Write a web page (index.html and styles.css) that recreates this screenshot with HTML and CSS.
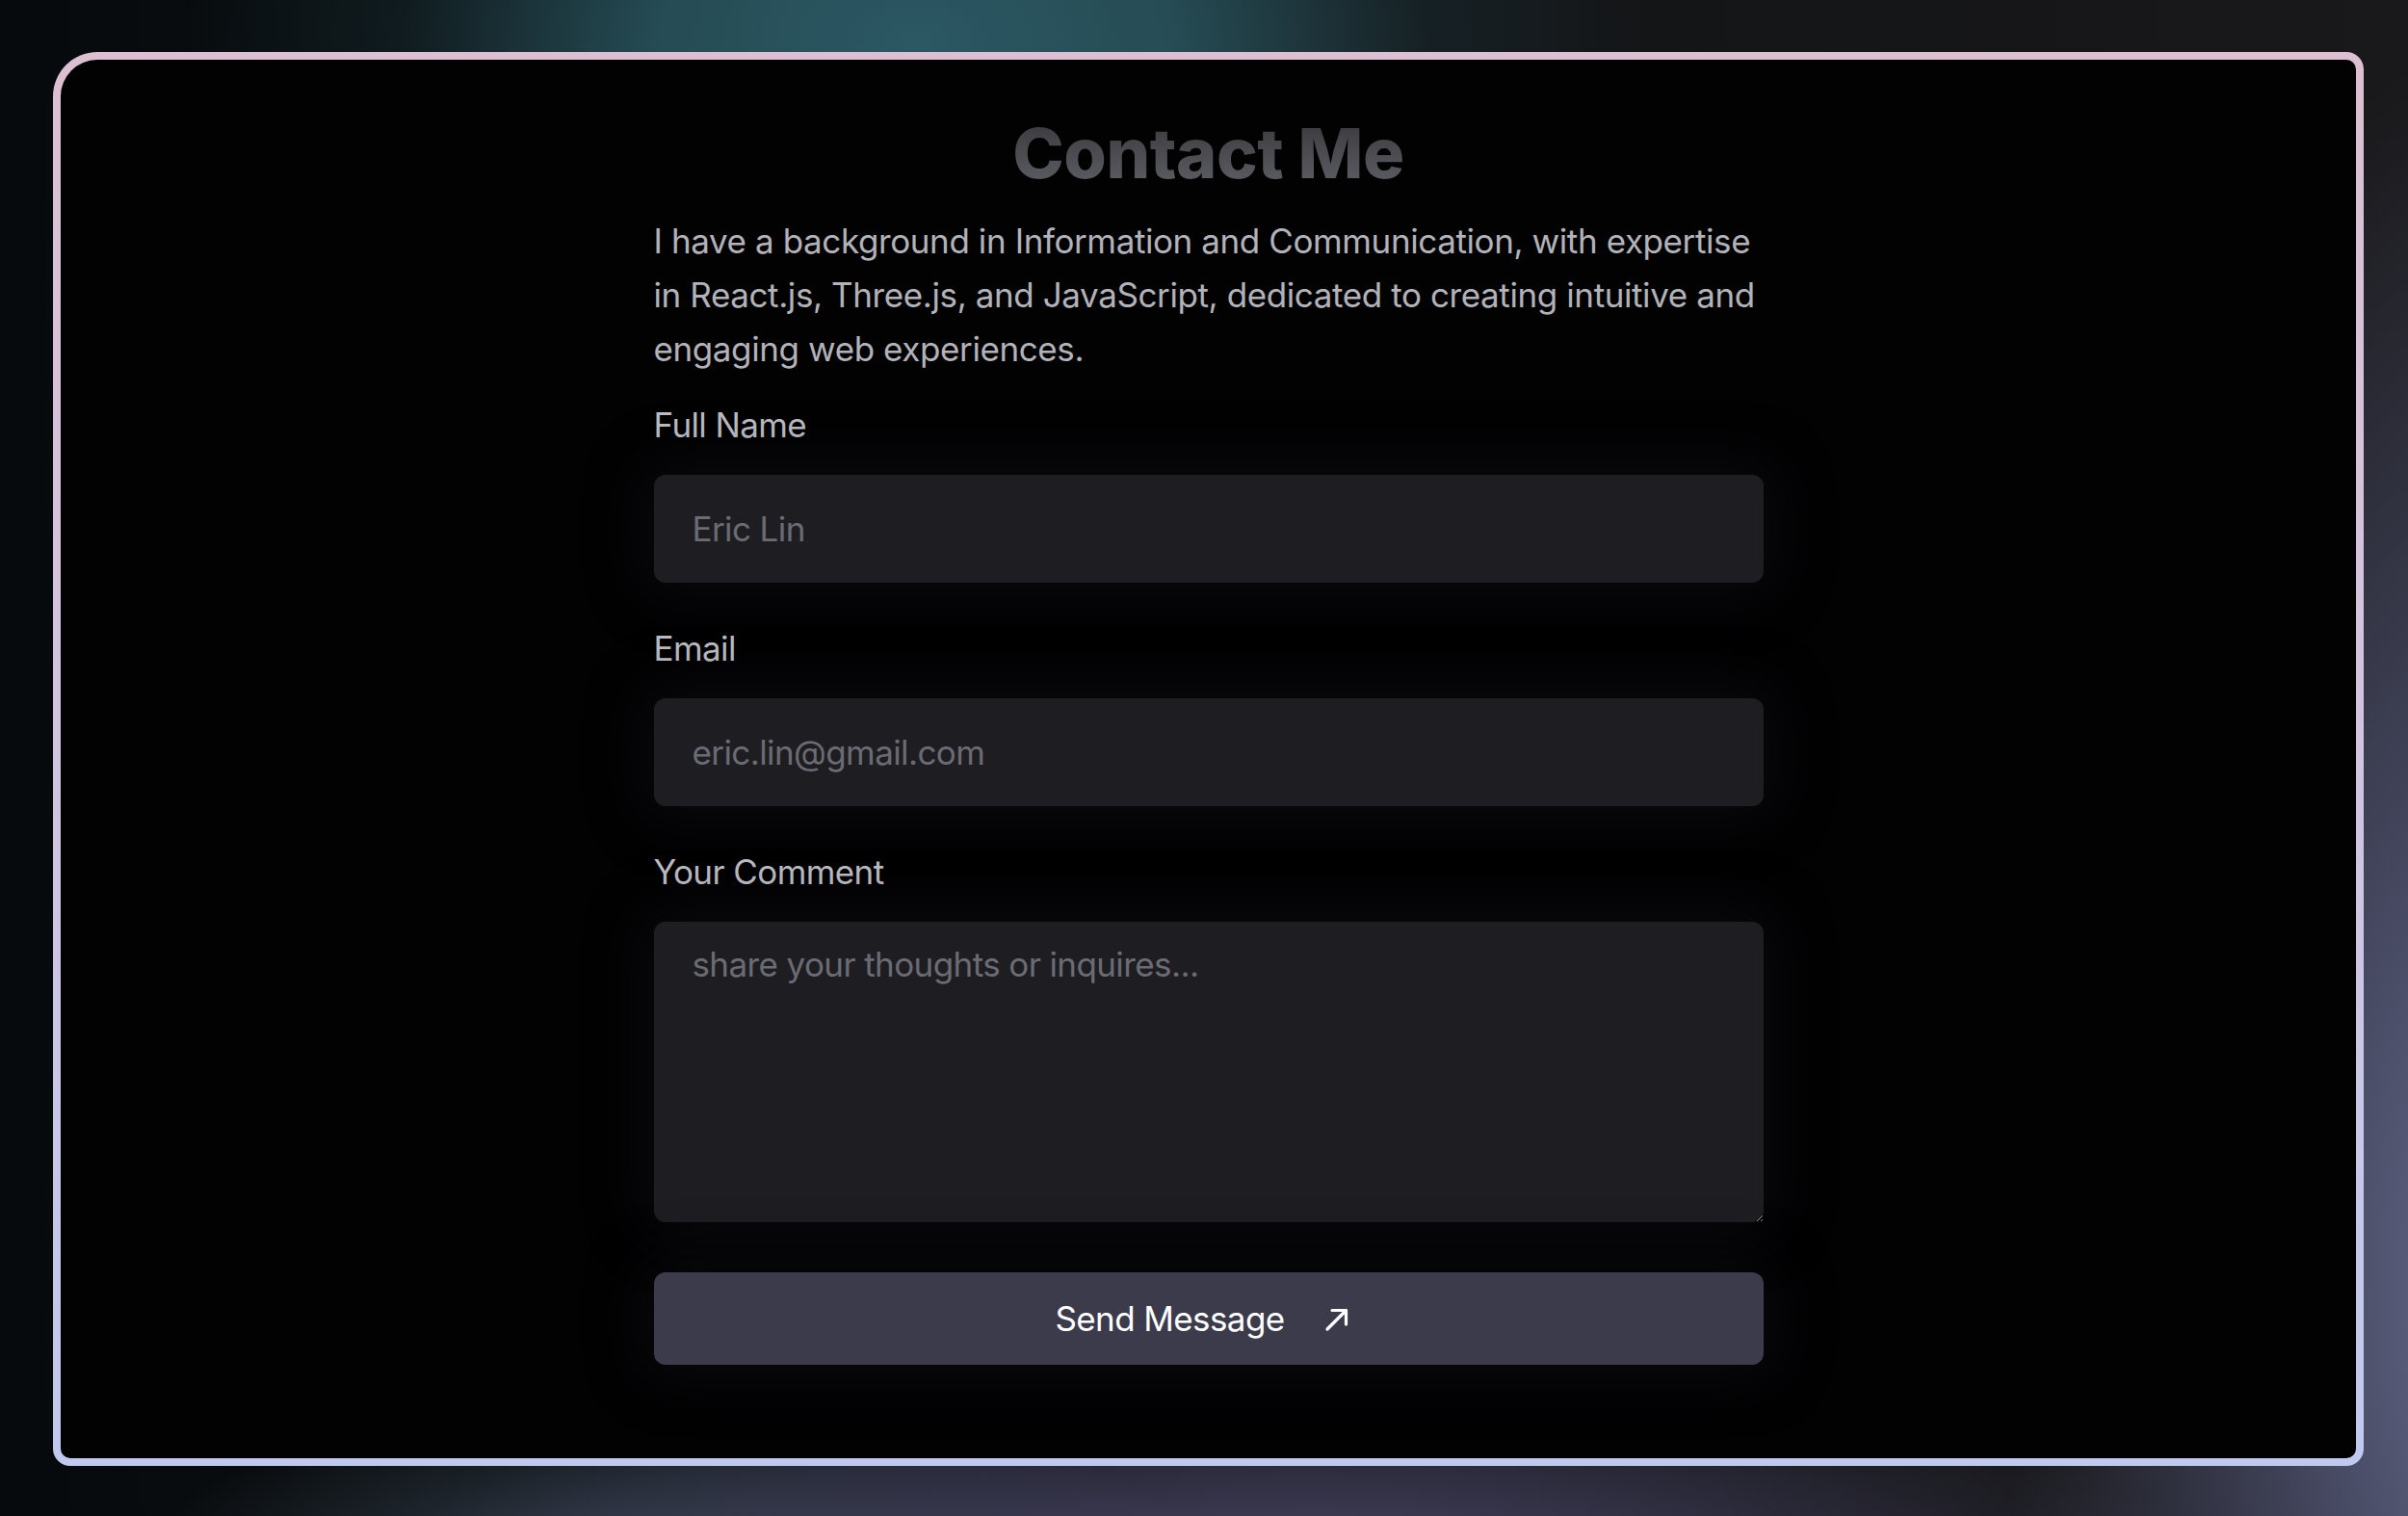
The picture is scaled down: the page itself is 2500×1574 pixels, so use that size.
FILE: index.html
```html
<!DOCTYPE html>
<html lang="en">
<head>
<meta charset="utf-8">
<title>Contact Me</title>
<link rel="stylesheet" href="styles.css">
</head>
<body>
<div class="page">
  <div class="frame">
    <main class="card">
      <form class="contact" onsubmit="return false">
        <h1 class="title">Contact Me</h1>
        <p class="intro">I have a background in Information and Communication, with expertise in React.js, Three.js, and JavaScript, dedicated to creating intuitive and engaging web experiences.</p>
        <div class="field">
          <label class="label" for="name">Full Name</label>
          <input class="input" id="name" type="text" placeholder="Eric Lin">
        </div>
        <div class="field">
          <label class="label" for="email">Email</label>
          <input class="input" id="email" type="email" placeholder="eric.lin@gmail.com">
        </div>
        <div class="field">
          <label class="label" for="comment">Your Comment</label>
          <textarea class="input textarea" id="comment" placeholder="share your thoughts or inquires..."></textarea>
        </div>
        <button class="send" type="submit">
          <span>Send Message</span>
          <svg class="arrow" width="48" height="48" viewBox="0 0 48 48" aria-hidden="true">
            <path d="M12 35 L31.5 15.5 M17 15.5 H31.5 V30" fill="none" stroke="#ffffff" stroke-width="3.2" stroke-linecap="round" stroke-linejoin="round"/>
          </svg>
        </button>
      </form>
    </main>
  </div>
</div>
</body>
</html>
```

FILE: styles.css
```css
html, body {
  margin: 0;
  padding: 0;
}

body {
  width: 2500px;
  height: 1574px;
  overflow: hidden;
  font-family: Inter, "Noto Sans", "Liberation Sans", sans-serif;
  background:
    radial-gradient(ellipse 760px 430px at 950px 40px, #2b5863 0%, rgba(42, 86, 96, 0.85) 35%, rgba(30, 60, 68, 0.3) 70%, rgba(20, 40, 46, 0) 100%),
    radial-gradient(ellipse 520px 1300px at 2600px 1350px, #676c8f 0%, rgba(90, 95, 130, 0.6) 45%, rgba(60, 60, 90, 0) 100%),
    radial-gradient(ellipse 950px 220px at 1350px 1640px, #4d4868 0%, rgba(70, 66, 98, 0.5) 55%, rgba(40, 40, 60, 0) 100%),
    radial-gradient(ellipse 550px 170px at 700px 1620px, #35404e 0%, rgba(40, 48, 60, 0) 100%),
    linear-gradient(90deg, #060a0c 0%, #101315 45%, #19181a 100%);
}

.page {
  box-sizing: border-box;
  height: 1574px;
  padding: 54px 46px 52px 55px;
  display: flex;
}

.frame {
  flex: 1;
  display: flex;
  padding: 8px;
  border-radius: 46px 18px 18px 18px;
  background: linear-gradient(180deg, #dcbfd0 0%, #d2c4de 45%, #c0c9ee 100%);
}

.card {
  flex: 1;
  display: flex;
  justify-content: center;
  border-radius: 38px 10px 10px 10px;
  background: #020203;
}

.contact {
  width: 1152px;
  padding-top: 61px;
  display: flex;
  flex-direction: column;
}

.title {
  margin: 0;
  text-align: center;
  font-size: 72px;
  line-height: 72px;
  font-weight: 800;
  letter-spacing: -0.5px;
  background: linear-gradient(180deg, #39393d 0%, #5d5e64 100%);
  -webkit-background-clip: text;
  background-clip: text;
  color: transparent;
}

.intro {
  margin: 27px 0 23px;
  font-size: 35px;
  line-height: 56px;
  color: #b2b2b9;
  letter-spacing: -0.4px;
}

.field {
  display: flex;
  flex-direction: column;
  gap: 24px;
  margin-bottom: 40px;
}

.field:nth-child(5) {
  margin-bottom: 52px;
}

.label {
  font-size: 35px;
  line-height: 56px;
  color: #bcbcc3;
  letter-spacing: -0.6px;
}

.input {
  box-sizing: border-box;
  width: 100%;
  height: 112px;
  padding: 0 40px;
  border: none;
  outline: none;
  border-radius: 12px;
  background: #1e1e22;
  color: #d0d0d6;
  font-family: inherit;
  font-size: 35px;
  letter-spacing: -0.6px;
  box-shadow: 0 0 60px 12px rgba(26, 26, 32, 0.35);
}

.input::placeholder {
  color: #6b6b73;
}

.textarea {
  height: 312px;
  padding: 23px 40px;
  line-height: 42px;
  resize: vertical;
}

.send {
  box-sizing: border-box;
  height: 96px;
  border: none;
  border-radius: 12px;
  background: #3c3b4b;
  color: #ffffff;
  font-family: inherit;
  font-size: 35px;
  letter-spacing: -0.6px;
  display: flex;
  align-items: center;
  justify-content: center;
  gap: 32px;
  cursor: pointer;
  box-shadow: 0 0 60px 12px rgba(26, 26, 32, 0.35);
}

.arrow {
  display: block;
}
```
